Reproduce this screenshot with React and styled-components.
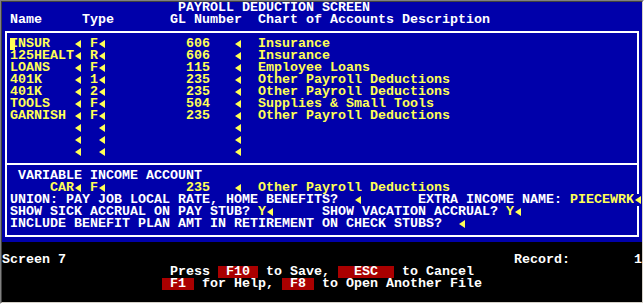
import React from 'react';
import styled, { createGlobalStyle } from 'styled-components';

const YELLOW = '#ffff55';
const WHITE = '#ffffff';
const BLUE = '#0000aa';
const RED = '#aa0000';

const Global = createGlobalStyle`
	body {
		margin: 0;
		background: #d4d0c8;
	}
`;

const Frame = styled.div`
	width: 642px;
	height: 302px;
	border-style: solid;
	border-width: 1px;
	border-color: #808080 #ffffff #ffffff #808080;
`;

const Screen = styled.div`
	width: 640px;
	height: 300px;
	border-style: solid;
	border-width: 1px;
	border-color: #404040 #d4d0c8 #d4d0c8 #404040;
	margin: 0;
	background: #000;
	font-family: "Liberation Mono", "DejaVu Sans Mono", monospace;
	font-size: 13.3333px;
	font-weight: bold;
	line-height: 12px;
	overflow: hidden;
`;

const BluePanel = styled.div`
	background: ${BLUE};
	height: 240px;
	display: flex;
	flex-direction: column;
`;

const Box = styled.div`
	margin: 5px 0 0 3px;
	width: 630px;
	border: 2px solid ${WHITE};
	padding: 5px 0;
	display: flex;
	flex-direction: column;
`;

const Rows = styled.div`
	margin: 0 -5px;
	display: flex;
	flex-direction: column;
`;

const Divider = styled.div`
	height: 2px;
	margin: 5px -2px;
	background: ${WHITE};
`;

const Footer = styled.div`
	height: 60px;
	display: flex;
	flex-direction: column;
	padding-top: 12px;
	box-sizing: border-box;
`;

const Row = styled.div`
	display: grid;
	grid-template-columns: repeat(80, 8px);
	height: 12px;
	width: 640px;
`;

const Cell = styled.span`
	grid-column: ${p => p.$c + 1} / span ${p => p.$n};
	color: ${p => p.$color};
	white-space: pre;
	height: 12px;
`;

const KeyCell = styled(Cell)`
	background: ${RED};
	color: ${WHITE};
	text-align: center;
`;

const CursorCell = styled(Cell)`
	background: linear-gradient(to right, ${YELLOW} 0 5px, transparent 5px);
`;

const ArrowCell = styled.span`
	grid-column: ${p => p.$c + 1} / span 1;
	height: 12px;
	background: ${p => (p.$cover ? BLUE : 'transparent')};
	display: flex;
	svg { display: block; }
`;

const T = ({ c, color = WHITE, children }) => (
	<Cell $c={c} $n={children.length} $color={color}>{children}</Cell>
);

const Y = ({ c, children }) => <T c={c} color={YELLOW}>{children}</T>;

const Key = ({ c, n, children }) => (
	<KeyCell $c={c} $n={n}>{children}</KeyCell>
);

const Arrow = ({ c, cover }) => (
	<ArrowCell $c={c} $cover={cover}>
		<svg width="8" height="12" viewBox="0 0 8 12">
			<polygon points="1,6 7,2 7,10" fill={YELLOW} />
		</svg>
	</ArrowCell>
);

const deductions = [
	{ name: 'INSUR', type: 'F', gl: '606', desc: 'Insurance' },
	{ name: '125HEALT', type: 'R', gl: '606', desc: 'Insurance' },
	{ name: 'LOANS', type: 'F', gl: '115', desc: 'Employee Loans' },
	{ name: '401K', type: '1', gl: '235', desc: 'Other Payroll Deductions' },
	{ name: '401K', type: '2', gl: '235', desc: 'Other Payroll Deductions' },
	{ name: 'TOOLS', type: 'F', gl: '504', desc: 'Supplies & Small Tools' },
	{ name: 'GARNISH', type: 'F', gl: '235', desc: 'Other Payroll Deductions' },
	{ name: '', type: '', gl: '', desc: '' },
	{ name: '', type: '', gl: '', desc: '' },
	{ name: '', type: '', gl: '', desc: '' },
];

const DeductionRow = ({ d, first }) => (
	<Row>
		{first ? (
			<>
				<CursorCell $c={1} $n={1} $color={YELLOW}>{d.name[0]}</CursorCell>
				<Y c={2}>{d.name.slice(1)}</Y>
			</>
		) : (
			d.name && <Y c={1}>{d.name}</Y>
		)}
		<Arrow c={9} />
		{d.type && <Y c={11}>{d.type}</Y>}
		<Arrow c={12} />
		{d.gl && <Y c={23}>{d.gl}</Y>}
		<Arrow c={29} />
		{d.desc && <Y c={32}>{d.desc}</Y>}
	</Row>
);

const App = () => (
	<>
		<Global />
		<Frame>
			<Screen>
				<BluePanel>
					<Row>
						<T c={22}>PAYROLL DEDUCTION SCREEN</T>
					</Row>
					<Row>
						<T c={1}>Name</T>
						<T c={10}>Type</T>
						<T c={21}>GL Number</T>
						<T c={32}>Chart of Accounts Description</T>
					</Row>
					<Box>
						<Rows>
							{deductions.map((d, i) => (
								<DeductionRow key={i} d={d} first={i === 0} />
							))}
						</Rows>
						<Divider />
						<Rows>
							<Row>
								<T c={2}>VARIABLE INCOME ACCOUNT</T>
							</Row>
							<Row>
								<Y c={6}>CAR</Y>
								<Arrow c={9} />
								<Y c={11}>F</Y>
								<Arrow c={12} />
								<Y c={23}>235</Y>
								<Arrow c={29} />
								<Y c={32}>Other Payroll Deductions</Y>
							</Row>
							<Row>
								<T c={1}>UNION: PAY JOB LOCAL RATE, HOME BENEFITS?</T>
								<Arrow c={44} />
								<T c={52}>EXTRA INCOME NAME:</T>
								<Y c={71}>PIECEWRK</Y>
								<Arrow c={79} cover />
							</Row>
							<Row>
								<T c={1}>SHOW SICK ACCRUAL ON PAY STUB?</T>
								<Y c={32}>Y</Y>
								<Arrow c={33} />
								<T c={40}>SHOW VACATION ACCRUAL?</T>
								<Y c={63}>Y</Y>
								<Arrow c={64} />
							</Row>
							<Row>
								<T c={1}>INCLUDE BENEFIT PLAN AMT IN RETIREMENT ON CHECK STUBS?</T>
								<Arrow c={57} />
							</Row>
						</Rows>
					</Box>
				</BluePanel>
				<Footer>
					<Row>
						<T c={0}>Screen 7</T>
						<T c={64}>Record:</T>
						<T c={79}>1</T>
					</Row>
					<Row>
						<T c={21}>Press</T>
						<Key c={27} n={5}>F10</Key>
						<T c={33}>to Save,</T>
						<Key c={42} n={7}>ESC</Key>
						<T c={50}>to Cancel</T>
					</Row>
					<Row>
						<Key c={20} n={4}>F1</Key>
						<T c={25}>for Help,</T>
						<Key c={35} n={4}>F8</Key>
						<T c={40}>to Open Another File</T>
					</Row>
				</Footer>
			</Screen>
		</Frame>
	</>
);

export default App;
